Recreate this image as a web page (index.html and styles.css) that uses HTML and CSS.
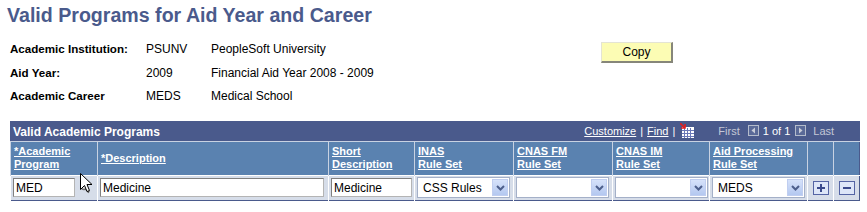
FILE: index.html
```html
<!DOCTYPE html>
<html lang="en">
<head>
    <meta charset="UTF-8">
    <title>Valid Programs for Aid Year and Career</title>
    <link rel="stylesheet" href="styles.css">
</head>
<body>
    <h1 class="page-title">Valid Programs for Aid Year and Career</h1>

    <div class="info">
        <div class="info-fields">
            <div class="info-row">
                <span class="info-label">Academic Institution:</span>
                <span class="info-code">PSUNV</span>
                <span class="info-desc">PeopleSoft University</span>
            </div>
            <div class="info-row">
                <span class="info-label">Aid Year:</span>
                <span class="info-code">2009</span>
                <span class="info-desc">Financial Aid Year 2008 - 2009</span>
            </div>
            <div class="info-row">
                <span class="info-label">Academic Career</span>
                <span class="info-code">MEDS</span>
                <span class="info-desc">Medical School</span>
            </div>
        </div>
        <button class="copy-btn">Copy</button>
    </div>

    <table class="grid">
        <colgroup>
            <col style="width:87px">
            <col style="width:231px">
            <col style="width:86px">
            <col style="width:99px">
            <col style="width:99px">
            <col style="width:97px">
            <col style="width:98px">
            <col style="width:26px">
            <col style="width:26px">
        </colgroup>
        <tr class="grid-bar">
            <td colspan="9">
                <div class="bar-inner">
                    <span class="bar-title">Valid Academic Programs</span>
                    <span class="bar-tools">
                        <a href="#">Customize</a><span class="sep">|</span><a href="#">Find</a><span class="sep">|</span><svg class="grid-icon" width="14" height="15" viewBox="0 0 14 15">
                            <rect x="2" y="4" width="12" height="11" fill="#fff"/>
                            <g fill="#6a78b8">
                                <rect x="4" y="5" width="1" height="10"/>
                                <rect x="7" y="5" width="1" height="10"/>
                                <rect x="10" y="5" width="1" height="10"/>
                                <rect x="2" y="7" width="12" height="1"/>
                                <rect x="2" y="10" width="12" height="1"/>
                                <rect x="2" y="13" width="12" height="1"/>
                            </g>
                            <path d="M0 0 L5 5 M5 1 V5 H1" stroke="#e02020" stroke-width="1.6" fill="none"/>
                        </svg><span class="nav-off first">First</span><svg class="nav-btn prev" width="11" height="11" viewBox="0 0 11 11">
                            <rect x="0.5" y="0.5" width="10" height="10" fill="#5a6a98" stroke="#b4bccc"/>
                            <path d="M7 2.5 V8.5 L3.5 5.5 Z" fill="#c8ccd8"/>
                        </svg><span class="nav-count">1 of 1</span><svg class="nav-btn next" width="11" height="11" viewBox="0 0 11 11">
                            <rect x="0.5" y="0.5" width="10" height="10" fill="#5a6a98" stroke="#b4bccc"/>
                            <path d="M4 2.5 V8.5 L7.5 5.5 Z" fill="#c8ccd8"/>
                        </svg><span class="nav-off last">Last</span>
                    </span>
                </div>
            </td>
        </tr>
        <tr class="grid-head">
            <th><a href="#">*Academic<br>Program</a></th>
            <th><a href="#">*Description</a></th>
            <th><a href="#">Short<br>Description</a></th>
            <th><a href="#">INAS<br>Rule Set</a></th>
            <th><a href="#">CNAS FM<br>Rule Set</a></th>
            <th><a href="#">CNAS IM<br>Rule Set</a></th>
            <th><a href="#">Aid Processing<br>Rule Set</a></th>
            <th></th>
            <th></th>
        </tr>
        <tr class="grid-row">
            <td class="cell-program">
                <input class="field field-program" type="text" value="MED">
                <svg class="lookup" width="10" height="12" viewBox="0 0 10 12">
                    <circle cx="4" cy="4.5" r="3" fill="#e8e8e8" stroke="#707070" stroke-width="1.4"/>
                    <path d="M6 7 L9 10.5" stroke="#606060" stroke-width="2"/>
                </svg>
                <svg class="cursor" width="13" height="21" viewBox="0 0 13 21">
                    <path d="M0.5 0.5 V16.5 L4.5 12.5 L7 18.5 L9.5 17.5 L7 11.5 H12 Z" fill="#fff" stroke="#000" stroke-width="1"/>
                </svg>
            </td>
            <td><input class="field field-desc" type="text" value="Medicine"></td>
            <td><input class="field field-short" type="text" value="Medicine"></td>
            <td><div class="dropdown"><span class="dd-value">CSS Rules</span><span class="dd-arrow"><svg width="9" height="6" viewBox="0 0 9 6"><path d="M1 1 L4.5 4.5 L8 1" stroke="#4d5f8c" stroke-width="2" fill="none"/></svg></span></div></td>
            <td><div class="dropdown"><span class="dd-value"></span><span class="dd-arrow"><svg width="9" height="6" viewBox="0 0 9 6"><path d="M1 1 L4.5 4.5 L8 1" stroke="#4d5f8c" stroke-width="2" fill="none"/></svg></span></div></td>
            <td><div class="dropdown"><span class="dd-value"></span><span class="dd-arrow"><svg width="9" height="6" viewBox="0 0 9 6"><path d="M1 1 L4.5 4.5 L8 1" stroke="#4d5f8c" stroke-width="2" fill="none"/></svg></span></div></td>
            <td><div class="dropdown"><span class="dd-value">MEDS</span><span class="dd-arrow"><svg width="9" height="6" viewBox="0 0 9 6"><path d="M1 1 L4.5 4.5 L8 1" stroke="#4d5f8c" stroke-width="2" fill="none"/></svg></span></div></td>
            <td class="cell-btn">
                <span class="row-btn">
                    <svg width="16" height="14" viewBox="0 0 16 14"><rect x="0.5" y="0.5" width="15" height="13" fill="#dde6f8" stroke="#5464a4"/><path d="M8 3 V11 M4 7 H12" stroke="#3a4a8c" stroke-width="2"/></svg>
                </span>
            </td>
            <td class="cell-btn">
                <span class="row-btn">
                    <svg width="16" height="14" viewBox="0 0 16 14"><rect x="0.5" y="0.5" width="15" height="13" fill="#dde6f8" stroke="#5464a4"/><path d="M4 7 H12" stroke="#3a4a8c" stroke-width="2"/></svg>
                </span>
            </td>
        </tr>
    </table>
</body>
</html>
```

FILE: styles.css
```css
body {
    margin: 0;
    font-family: "Liberation Sans", Arial, sans-serif;
    font-size: 12px;
    color: #000;
    background: #fff;
}
.page-title {
    margin: 0;
    padding: 3px 0 0 7px;
    font-size: 19.6px;
    line-height: 24px;
    font-weight: bold;
    color: #4a5a8c;
}
.info {
    display: flex;
    align-items: flex-start;
    margin-top: 10px;
}
.info-fields {
    display: flex;
    flex-direction: column;
    width: 601px;
}
.info-row {
    display: flex;
    height: 23.5px;
    line-height: 24px;
}
.info-label {
    width: 136px;
    padding-left: 10px;
    font-weight: bold;
    font-size: 11.6px;
}
.info-code {
    width: 65px;
}
.copy-btn {
    margin-top: 5px;
    width: 72px;
    height: 21px;
    padding: 0;
    font-family: "Liberation Sans", Arial, sans-serif;
    font-size: 12px;
    background: #fcfcb4;
    border: 1px solid #e4e4d4;
    border-right: 2px solid #86867a;
    border-bottom: 2px solid #86867a;
    color: #000;
}
.grid {
    margin: 13px 0 0 10px;
    width: 849px;
    table-layout: fixed;
    border-collapse: collapse;
    border: 1px solid #4a5a8c;
}
.grid td, .grid th {
    padding: 0;
}
.grid-bar td {
    background: #4a5a8c;
    height: 19px;
}
.bar-inner {
    display: flex;
    justify-content: space-between;
    align-items: center;
    height: 19px;
    padding: 1px 25px 0 2px;
    box-sizing: border-box;
}
.bar-title {
    color: #fff;
    font-weight: bold;
    font-size: 12px;
    line-height: 14px;
}
.bar-tools {
    display: flex;
    align-items: center;
    color: #fff;
    font-size: 11px;
    line-height: 13px;
}
.bar-tools a {
    color: #fff;
}
.sep {
    margin: 0 4px;
}
.grid-icon {
    margin: -2px 0 0 1px;
}
.nav-off {
    color: #c4c8d6;
}
.first {
    margin-left: 24px;
}
.nav-btn {
    margin-top: -2px;
}
.prev {
    margin-left: 8px;
}
.nav-count {
    margin: 0 5px 0 4px;
}
.last {
    margin-left: 7px;
}
.grid-head th {
    background: #5a82b0;
    height: 33px;
    text-align: left;
    vertical-align: middle;
    padding-left: 3px;
    border-left: 1px solid #c8d2e2;
    border-top: 1px solid #c8d2e2;
    font-size: 11px;
    line-height: 13px;
}
.grid-head th a {
    color: #fff;
}
.grid-row td {
    background: #d6dde9;
    height: 24px;
    vertical-align: middle;
    padding-left: 2px;
    border-left: 1px solid #fff;
    border-top: 1px solid #fff;
    white-space: nowrap;
    line-height: 14px;
}
.cell-program {
    position: relative;
}
.field {
    box-sizing: border-box;
    height: 19px;
    padding: 0 2px;
    font-family: "Liberation Sans", Arial, sans-serif;
    font-size: 12px;
    border: 1px solid #b4b4b4;
    border-top-color: #808080;
    border-left-color: #808080;
    background: #fff;
    vertical-align: middle;
}
.field-program { width: 62px; }
.field-desc { width: 224px; }
.field-short { width: 81px; }
.lookup {
    vertical-align: middle;
    margin-left: 2px;
}
.cursor {
    position: absolute;
    left: 69px;
    top: -3px;
}
.dropdown {
    box-sizing: border-box;
    display: flex;
    align-items: center;
    width: 93px;
    height: 21px;
    border: 1px solid #a4b0c8;
    background: #fff;
    padding: 1px;
}
.dd-value {
    flex: 1;
    padding-left: 4px;
    font-size: 12px;
}
.dd-arrow {
    display: flex;
    align-items: center;
    justify-content: center;
    width: 16px;
    height: 17px;
    background: linear-gradient(#d6e2fa, #b4c8f0);
    border: 1px solid #c0cef0;
    box-sizing: border-box;
}
.cell-btn {
    text-align: center;
}
.grid-row .cell-btn {
    padding-left: 0;
}
.row-btn svg {
    display: block;
    margin: 0 auto;
}
```
